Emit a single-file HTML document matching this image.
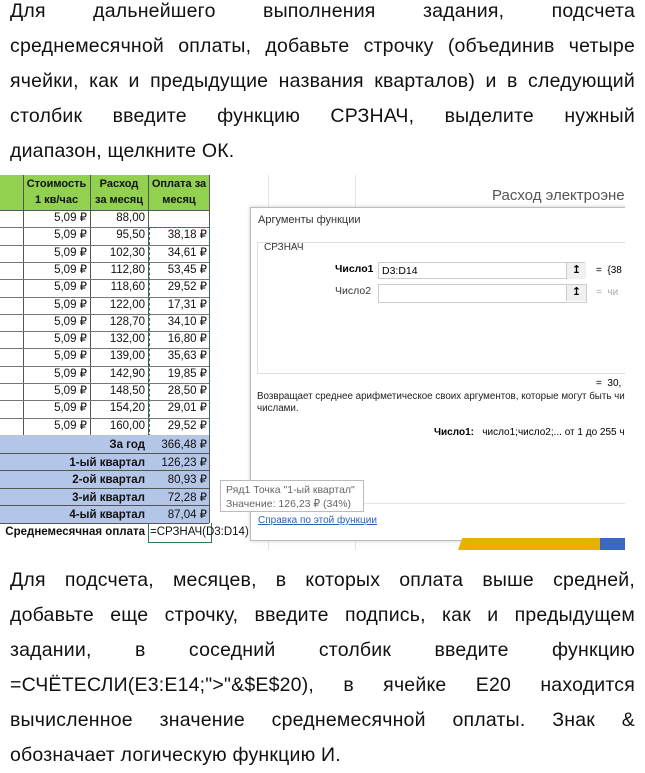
<!DOCTYPE html>
<html><head><meta charset="utf-8"><style>
body{margin:0;width:645px;height:768px;background:#fff;overflow:hidden;position:relative;font-family:"Liberation Sans","DejaVu Sans",sans-serif}
.p{position:absolute;left:10px;width:625px;font-size:19.5px;color:#111;text-align:justify;line-height:35px;letter-spacing:0.2px}
.p span{display:block;text-align-last:justify;height:35px;white-space:nowrap}
.p span.l{text-align-last:left}
.shot{position:absolute;left:0;top:175px;width:625px;height:375px;background:#fff;overflow:hidden;font-size:11.5px}
.c{position:absolute;box-sizing:border-box;text-align:right;padding-right:3px;line-height:17px;color:#111}
.g{position:absolute;background:#e4e4e4}
</style></head><body>
<div class="p" style="top:-6px">
<span>Для дальнейшего выполнения задания, подсчета</span>
<span>среднемесячной оплаты, добавьте строчку (объединив четыре</span>
<span>ячейки, как и предыдущие названия кварталов) и в следующий</span>
<span>столбик введите функцию СРЗНАЧ, выделите нужный</span>
<span class="l">диапазон, щелкните ОК.</span>
</div>
<div class="shot">
<div class="g" style="left:268px;top:0;width:1px;height:375px"></div>
<div class="g" style="left:355px;top:0;width:1px;height:375px"></div>
<div style="position:absolute;left:492px;top:12px;font-size:15px;color:#555">Расход электроэне</div>
<!-- header -->
<div style="position:absolute;left:0;top:0;width:210px;height:35px;background:#92d050;border-bottom:1px solid #555"></div>
<div class="c" style="left:23px;top:1px;width:67px;text-align:center;font-weight:bold;font-size:11px;line-height:16px;padding:0">Стоимость<br>1 кв/час</div>
<div class="c" style="left:90px;top:1px;width:58px;text-align:center;font-weight:bold;font-size:11px;line-height:16px;padding:0">Расход<br>за месяц</div>
<div class="c" style="left:148px;top:1px;width:62px;text-align:center;font-weight:bold;font-size:11px;line-height:16px;padding:0">Оплата за<br>месяц</div>
<div style="position:absolute;left:23px;top:0;width:1px;height:260px;background:#555"></div>
<div style="position:absolute;left:90px;top:0;width:1px;height:260px;background:#555"></div>
<div style="position:absolute;left:148px;top:0;width:1px;height:348px;background:#555"></div>
<div style="position:absolute;left:209px;top:0;width:1px;height:348px;background:#555"></div>
<div id="rows"></div>
<div style="position:absolute;left:149px;top:52px;width:59px;height:208px;border:1px dashed #2a7a50"></div>
<div style="position:absolute;left:0;top:260px;width:209px;height:88px;background:#b4c6e7"></div>
<div class="c" style="left:0;top:262px;width:148px;font-weight:bold">За год</div><div class="c" style="left:148px;top:262px;width:62px">366,48 ₽</div>
<div class="c" style="left:0;top:280px;width:148px;font-weight:bold">1-ый квартал</div><div class="c" style="left:148px;top:280px;width:62px">126,23 ₽</div>
<div class="c" style="left:0;top:297px;width:148px;font-weight:bold">2-ой квартал</div><div class="c" style="left:148px;top:297px;width:62px">80,93 ₽</div>
<div class="c" style="left:0;top:315px;width:148px;font-weight:bold">3-ий квартал</div><div class="c" style="left:148px;top:315px;width:62px">72,28 ₽</div>
<div class="c" style="left:0;top:332px;width:148px;font-weight:bold">4-ый квартал</div><div class="c" style="left:148px;top:332px;width:62px">87,04 ₽</div>
<div style="position:absolute;left:0;top:278px;width:209px;height:1px;background:#555"></div>
<div style="position:absolute;left:0;top:295px;width:209px;height:1px;background:#555"></div>
<div style="position:absolute;left:0;top:313px;width:209px;height:1px;background:#555"></div>
<div style="position:absolute;left:0;top:330px;width:209px;height:1px;background:#555"></div>
<div style="position:absolute;left:0;top:348px;width:209px;height:1px;background:#555"></div>
<div class="c" style="left:0;top:349px;width:148px;font-weight:bold">Среднемесячная оплата</div>
<div style="position:absolute;left:148px;top:348px;width:62px;height:19px;border:1px solid #2a7a50;border-top:none"></div>
<div class="c" style="left:150px;top:349px;width:120px;text-align:left;font-size:11.5px">=СРЗНАЧ(D3:D14)</div>
<!-- dialog -->
<div style="position:absolute;left:250px;top:32px;width:380px;height:332px;background:#fff;border:1px solid #bbb;box-shadow:0 0 4px #ccc">
<div style="position:absolute;left:7px;top:6px;font-size:11px;color:#333">Аргументы функции</div>
<div style="position:absolute;left:6px;top:34px;width:380px;height:130px;border:1px solid #ddd"></div>
<div style="position:absolute;left:13px;top:34px;font-size:10px;color:#333">СРЗНАЧ</div>
<div style="position:absolute;left:84px;top:55px;font-size:10.5px;font-weight:bold">Число1</div>
<div style="position:absolute;left:84px;top:77px;font-size:10.5px;color:#333">Число2</div>
<div style="position:absolute;left:127px;top:54px;width:207px;height:17px;border:1px solid #ccc;font-size:10.5px;line-height:17px;padding-left:3px;box-sizing:border-box">D3:D14</div>
<div style="position:absolute;left:127px;top:76px;width:207px;height:17px;border:1px solid #ccc"></div>
<div style="position:absolute;left:315px;top:55px;width:19px;height:16px;background:#f0f0f0;border-left:1px solid #ccc;text-align:center;font-size:11px;font-weight:bold">↥</div>
<div style="position:absolute;left:315px;top:77px;width:19px;height:16px;background:#f0f0f0;border-left:1px solid #ccc;text-align:center;font-size:11px;font-weight:bold">↥</div>
<div style="position:absolute;left:345px;top:57px;font-size:10px">= &nbsp;{38</div>
<div style="position:absolute;left:345px;top:79px;font-size:10px;color:#aaa">= &nbsp;чи</div>
<div style="position:absolute;left:345px;top:170px;font-size:10px">= &nbsp;30,</div>
<div style="position:absolute;left:6px;top:183px;font-size:9.8px;color:#222;line-height:12px;white-space:nowrap">Возвращает среднее арифметическое своих аргументов, которые могут быть числа<br>числами.</div>
<div style="position:absolute;left:183px;top:219px;font-size:10px;white-space:nowrap"><b>Число1:</b> &nbsp;&nbsp;число1;число2;... от 1 до 255 чисел</div>
<div style="position:absolute;left:6px;top:295px;width:380px;height:1px;background:#e4e4e4"></div>
<div style="position:absolute;left:7px;top:307px;font-size:10px;color:#2a62b8;text-decoration:underline">Справка по этой функции</div>
</div>
<div style="position:absolute;left:220px;top:305px;width:144px;height:32px;background:#fff;border:1px solid #bbb;font-size:10.5px;color:#666;line-height:14px;padding:2px 5px;box-sizing:border-box;white-space:nowrap">Ряд1 Точка "1-ый квартал"<br>Значение: 126,23 ₽ (34%)</div>
<div style="position:absolute;left:458px;top:363px;width:142px;height:12px;background:#e8b000;clip-path:polygon(3% 0,100% 0,100% 100%,0 100%)"></div>
<div style="position:absolute;left:600px;top:363px;width:25px;height:12px;background:#3a68c0"></div>
</div>
<script>
var d=["88,00","95,50","102,30","112,80","118,60","122,00","128,70","132,00","139,00","142,90","148,50","154,20","160,00"];
var e=["","38,18 ₽","34,61 ₽","53,45 ₽","29,52 ₽","17,31 ₽","34,10 ₽","16,80 ₽","35,63 ₽","19,85 ₽","28,50 ₽","29,01 ₽","29,52 ₽"];
var h="";for(var i=0;i<13;i++){var t=35+i*17.3;
h+='<div class="c" style="left:23px;top:'+t+'px;width:67px">5,09 ₽</div><div class="c" style="left:90px;top:'+t+'px;width:58px">'+d[i]+'</div><div class="c" style="left:148px;top:'+t+'px;width:62px">'+e[i]+'</div><div style="position:absolute;left:0;top:'+(t+17.3)+'px;width:209px;height:1px;background:#777"></div>';}
document.getElementById("rows").outerHTML=h;
</script>
<div class="p" style="top:563px">
<span>Для подсчета, месяцев, в которых оплата выше средней,</span>
<span>добавьте еще строчку, введите подпись, как и предыдущем</span>
<span>задании, в соседний столбик введите функцию</span>
<span>=СЧЁТЕСЛИ(E3:E14;"&gt;"&amp;$E$20), в ячейке E20 находится</span>
<span>вычисленное значение среднемесячной оплаты. Знак &amp;</span>
<span class="l">обозначает логическую функцию И.</span>
</div>
</body></html>
